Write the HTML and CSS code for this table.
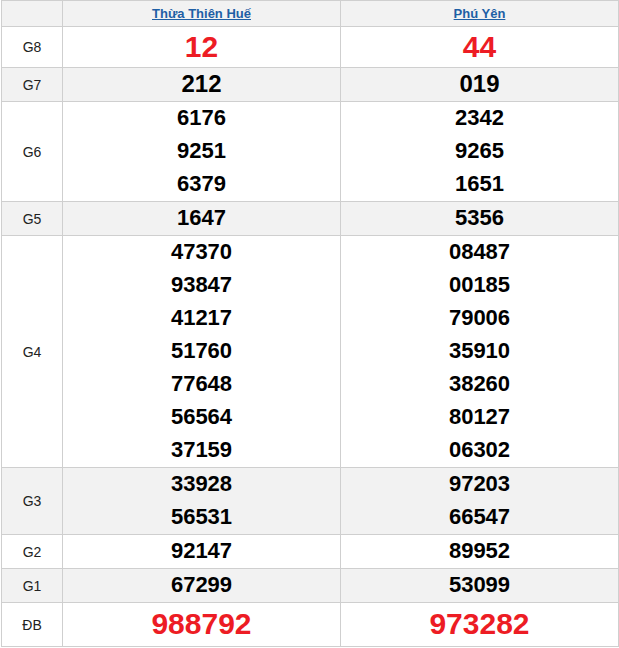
FILE: index.html
```html
<!DOCTYPE html>
<html>
<head>
<meta charset="utf-8">
<link rel="stylesheet" href="styles.css">
</head>
<body>
<div class="wrap">
<table class="kq">
<colgroup><col class="c-lbl"><col class="c-prov"><col class="c-prov"></colgroup>
<tr class="hdr"><th></th><th><a href="#">Thừa Thiên Huế</a></th><th><a href="#">Phú Yên</a></th></tr>
<tr class="g8"><td class="lbl">G8</td><td><div class="n red">12</div></td><td><div class="n red">44</div></td></tr>
<tr class="alt"><td class="lbl">G7</td><td><div class="n big">212</div></td><td><div class="n big">019</div></td></tr>
<tr><td class="lbl">G6</td><td><div class="n">6176</div><div class="n">9251</div><div class="n">6379</div></td><td><div class="n">2342</div><div class="n">9265</div><div class="n">1651</div></td></tr>
<tr class="alt"><td class="lbl">G5</td><td><div class="n">1647</div></td><td><div class="n">5356</div></td></tr>
<tr><td class="lbl">G4</td><td><div class="n">47370</div><div class="n">93847</div><div class="n">41217</div><div class="n">51760</div><div class="n">77648</div><div class="n">56564</div><div class="n">37159</div></td><td><div class="n">08487</div><div class="n">00185</div><div class="n">79006</div><div class="n">35910</div><div class="n">38260</div><div class="n">80127</div><div class="n">06302</div></td></tr>
<tr class="alt"><td class="lbl">G3</td><td><div class="n">33928</div><div class="n">56531</div></td><td><div class="n">97203</div><div class="n">66547</div></td></tr>
<tr><td class="lbl">G2</td><td><div class="n">92147</div></td><td><div class="n">89952</div></td></tr>
<tr class="alt"><td class="lbl">G1</td><td><div class="n">67299</div></td><td><div class="n">53099</div></td></tr>
<tr class="db"><td class="lbl">ĐB</td><td><div class="n red">988792</div></td><td><div class="n red">973282</div></td></tr>
</table>
</div>
</body>
</html>
```
FILE: styles.css
```css
html, body {
  margin: 0;
  padding: 0;
  background: #fff;
}
.wrap {
  padding-left: 1px;
}
.kq {
  border-collapse: collapse;
  table-layout: fixed;
  width: 617px;
  font-family: "Liberation Sans", Arial, sans-serif;
  color: #000;
}
.c-lbl { width: 61px; }
.c-prov { width: 278px; }
.kq th, .kq td {
  border: 1px solid #cfcfcf;
  padding: 0;
  text-align: center;
  vertical-align: middle;
}
.hdr th {
  background: #f2f2f2;
  height: 25px;
  font-size: 13px;
  font-weight: bold;
}
.hdr a {
  color: #1e5fa5;
  text-decoration: underline;
}
.alt td { background: #f2f2f2; }
.lbl {
  font-size: 14px;
  color: #222;
}
.n {
  font-size: 22px;
  font-weight: bold;
  line-height: 32px;
  height: 32px;
  padding-bottom: 1px;
}
.n.big { font-size: 24px; }
.g8 .n { height: 39px; line-height: 39px; }
.db .n { height: 42px; line-height: 42px; }
.n.red {
  color: #ed1c24;
  font-size: 30px;
}
```
